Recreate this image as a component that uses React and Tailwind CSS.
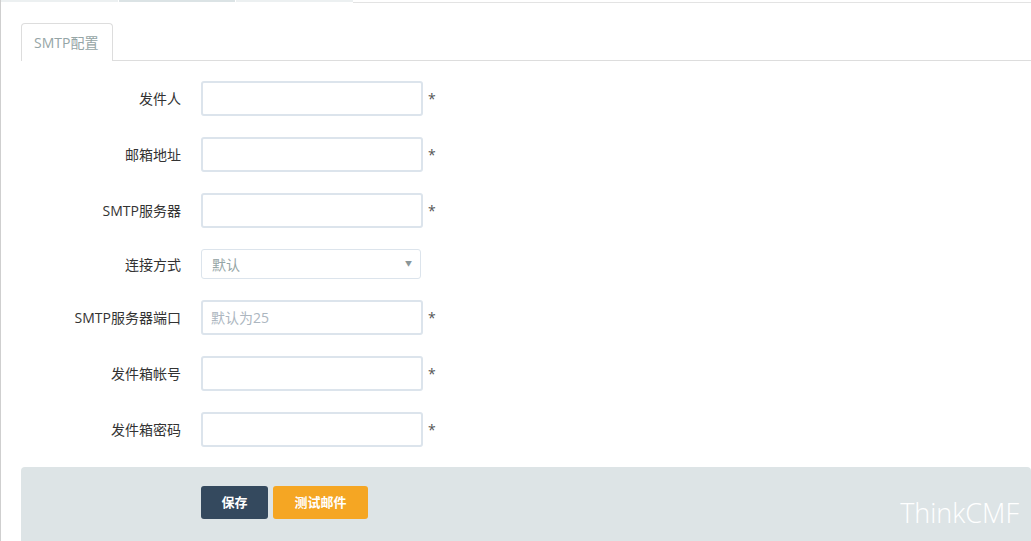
import React from 'react';

const font = { fontFamily: '"Open Sans", "Noto Sans", "Noto Sans CJK SC", sans-serif' };

const fields = [
    { label: '发件人', type: 'input', required: true },
    { label: '邮箱地址', type: 'input', required: true },
    { label: 'SMTP服务器', type: 'input', required: true },
    { label: '连接方式', type: 'select', value: '默认' },
    { label: 'SMTP服务器端口', type: 'input', placeholder: '默认为25', required: true },
    { label: '发件箱帐号', type: 'input', required: true },
    { label: '发件箱密码', type: 'input', required: true },
];

function Row({ field }) {
    return (
        <div className="flex items-center mb-[21px]">
            <label className="w-[160px] text-right text-[14px] text-[#333]">{field.label}</label>
            <div className="pl-[20px] flex items-center">
                {field.type === 'select' ? (
                    <div className="w-[220px] h-[30px] border border-[#dce4ec] rounded-[3px] flex items-center justify-between pl-[10px] pr-[8px] text-[14px] text-[#95a5a6]">
                        <span>{field.value}</span>
                        <span className="text-[7px] text-[#8a9699]">▼</span>
                    </div>
                ) : (
                    <input
                        className="w-[222px] h-[35px] border-2 border-[#dce4ec] rounded-[3px] px-[8px] text-[14px] outline-none placeholder:text-[#acb6c0]"
                        placeholder={field.placeholder || ''}
                        style={font}
                    />
                )}
                {field.required && <span className="ml-[5px] text-[14px] text-[#555]">*</span>}
            </div>
        </div>
    );
}

export default function App() {
    return (
        <div className="h-[541px] w-[1031px] overflow-hidden bg-white border-l border-[#cfcfcf] relative" style={font}>
            <div className="flex items-start h-[3px]">
                <div className="w-[117px] h-[2px] bg-[#ecf0f1]"></div>
                <div className="w-[116px] h-[2px] bg-[#dbe3e5] ml-px"></div>
                <div className="w-[117px] h-[2px] bg-[#ecf0f1] ml-px"></div>
                <div className="flex-1 h-[3px] border-b border-[#e3e3e3]"></div>
            </div>
            <div className="pl-[20px] pt-[20px]">
                <div className="flex border-b border-[#dddddd]">
                    <div className="w-[92px] h-[38px] border border-b-0 border-[#dddddd] rounded-t-[4px] flex items-center pl-[12px] text-[14px] text-[#95a5a6] -mb-px bg-white">
                        SMTP配置
                    </div>
                </div>
                <div className="pt-[20px]">
                    {fields.map((f) => (
                        <Row key={f.label} field={f} />
                    ))}
                </div>
                <div className="bg-[#dde4e6] rounded-[4px] h-[80px] pl-[180px] pt-[19px] flex items-start gap-[5px] relative -mt-px">
                    <button className="h-[33px] w-[67px] rounded-[3px] bg-[#34495e] text-white text-[13px] font-bold">保存</button>
                    <button className="h-[33px] w-[95px] rounded-[3px] bg-[#f5a623] text-white text-[13px] font-bold">测试邮件</button>
                    <div className="absolute right-[12px] top-[32px] text-[27px] font-light text-white leading-none">ThinkCMF</div>
                </div>
            </div>
        </div>
    );
}
